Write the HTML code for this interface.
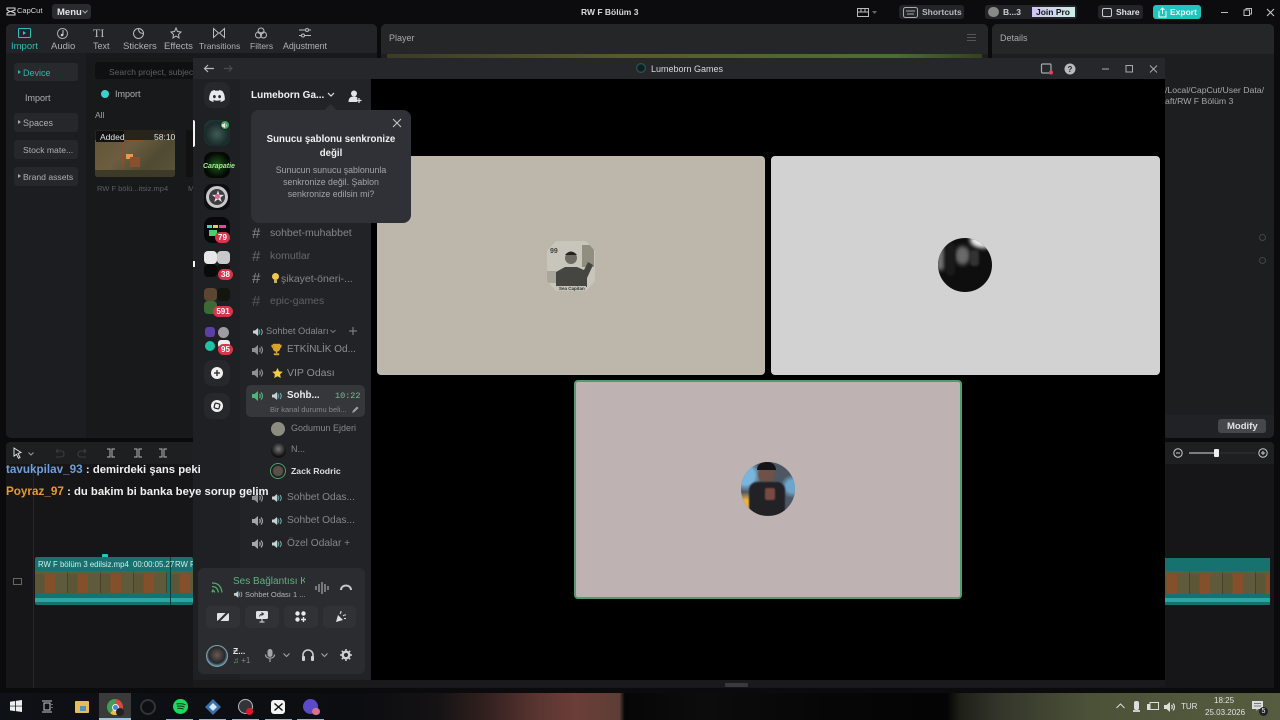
<!DOCTYPE html>
<html><head><meta charset="utf-8"><style>
*{box-sizing:border-box;margin:0;padding:0}
html,body{width:1280px;height:720px;overflow:hidden;background:#0b0b0d;font-family:"Liberation Sans","Noto Sans CJK JP",sans-serif}
.a{position:absolute;white-space:nowrap}
svg{position:absolute;overflow:visible}
.ct{font-size:9.5px;color:#aeb0b2;text-align:center}
.srv{position:absolute;left:204px;width:26px;height:26px;border-radius:8px;overflow:hidden}
.b{position:absolute;background:#d8344a;color:#fff;font-size:8px;font-weight:700;border-radius:8px;height:11px;line-height:11px;text-align:center;border:0}
.ch{position:absolute;font-size:10.5px;color:#7f8186}
.hash{position:absolute;left:252px;font-size:15px;color:#85878c;font-weight:400}
.fr{position:absolute;top:0;height:100%;width:33px;background:linear-gradient(90deg,#5a5636 0,#5a5636 30%,#84502c 30%,#84502c 62%,#5f5a3c 62%,#5f5a3c 100%);border-right:1px solid #46422a;border-top:3px solid #55623a}
</style></head><body>
<!-- capcut top bar -->
<div class="a" style="left:0;top:0;width:1280px;height:24px;background:#0c0c0e"></div>
<svg style="left:6px;top:7px" width="10" height="9" viewBox="0 0 10 9"><path d="M1 1h8v2L5 4.500 9 6v2H1V6l3-1.500L1 3z" fill="none" stroke="#ddd" stroke-width="1"/></svg>
<div class="a" style="left:17px;top:6px;font-size:7.500px;color:#d8d8d8">CapCut</div>
<div class="a" style="left:52px;top:4px;width:39px;height:15px;background:#2a2b2e;border-radius:3px"></div>
<div class="a" style="left:57px;top:6.500px;font-size:9.500px;font-weight:700;color:#e6e6e6">Menu</div>
<svg style="left:82px;top:10px" width="6" height="4"><path d="M.5.500L3 3l2.500-2.500" fill="none" stroke="#aaa"/></svg>
<div class="a" style="left:581px;top:7px;font-size:8.500px;font-weight:700;color:#d8d8d8">RW F Bölüm 3</div>
<svg style="left:857px;top:8px" width="12" height="9"><rect x=".5" y=".5" width="11" height="8" fill="none" stroke="#bbb"/><path d="M0 4h12M4 0v4M8 0v4" stroke="#bbb"/></svg>
<svg style="left:872px;top:11px" width="5" height="3"><path d="M0 0h5L2.500 3z" fill="#666"/></svg>
<div class="a" style="left:899px;top:5px;width:65px;height:14px;background:#232427;border-radius:3px"></div>
<svg style="left:903px;top:7px" width="15" height="11"><rect x=".5" y=".5" width="14" height="10" rx="2" fill="none" stroke="#aaa"/><path d="M3 4h9M4 7h7" stroke="#aaa"/></svg>
<div class="a" style="left:922px;top:7px;font-size:8.500px;font-weight:700;color:#b9b9b9">Shortcuts</div>
<div class="a" style="left:985px;top:5px;width:92px;height:14px;background:#232427;border-radius:3px"></div>
<div class="a" style="left:988px;top:7px;width:11px;height:10px;border-radius:5px;background:#888"></div>
<div class="a" style="left:1003px;top:7px;font-size:8.500px;font-weight:700;color:#cfcfcf">B...3</div>
<div class="a" style="left:1032px;top:7px;width:43px;height:10px;background:linear-gradient(90deg,#cfc4f2,#cdeee8)"></div>
<div class="a" style="left:1036px;top:7px;font-size:8.500px;font-weight:700;color:#111">Join Pro</div>
<div class="a" style="left:1098px;top:5px;width:45px;height:14px;background:#232427;border-radius:3px"></div>
<svg style="left:1102px;top:8px" width="11" height="9"><rect x=".5" y=".5" width="9" height="8" rx="1.500" fill="none" stroke="#ccc"/></svg>
<div class="a" style="left:1116px;top:7px;font-size:8.500px;font-weight:700;color:#e0e0e0">Share</div>
<div class="a" style="left:1153px;top:5px;width:48px;height:14px;background:#1fc5bd;border-radius:3px"></div>
<svg style="left:1158px;top:7px" width="9" height="11"><path d="M1 4v6h7V4M4.500 7V1M2.500 3l2-2 2 2" fill="none" stroke="#e8fffb"/></svg>
<div class="a" style="left:1170px;top:7px;font-size:8.500px;font-weight:700;color:#e8fffb">Export</div>
<svg style="left:1221px;top:8px" width="55" height="9"><path d="M0 4.500h7" stroke="#bbb"/><rect x="23" y="2" width="5.500" height="5.500" fill="none" stroke="#bbb"/><path d="M25 2V.5h5.500V6H28.500" fill="none" stroke="#bbb"/><path d="M46 1l7 7M53 1l-7 7" stroke="#ccc"/></svg>

<!-- capcut panels -->
<div class="a" style="left:6px;top:24px;width:371px;height:414px;background:#1c1d20;border-radius:5px"></div>
<div class="a" style="left:6px;top:24px;width:371px;height:29px;background:#232427;border-radius:5px 5px 0 0"></div>
<div class="a" style="left:86px;top:53px;width:291px;height:385px;background:#18191b"></div>
<div class="a" style="left:381px;top:24px;width:607px;height:414px;background:#1d1e20;border-radius:5px"></div>
<div class="a" style="left:381px;top:24px;width:607px;height:30px;background:#252628;border-radius:5px 5px 0 0"></div>
<div class="a ct" style="left:389px;top:33px;color:#aaa;font-size:9px">Player</div>
<div class="a" style="left:387px;top:54px;width:595px;height:6px;background:linear-gradient(90deg,#3d3a28,#5a5a2c 40%,#4c6e34 85%,#36401f)"></div>
<div class="a" style="left:967px;top:34px;width:9px;height:7px;border-top:1px solid #555;border-bottom:1px solid #555"></div>
<div class="a" style="left:967px;top:37px;width:9px;height:1px;background:#555"></div>
<div class="a" style="left:992px;top:24px;width:282px;height:414px;background:#1d1e20;border-radius:5px"></div>
<div class="a" style="left:992px;top:24px;width:282px;height:30px;background:#252628;border-radius:5px 5px 0 0"></div>
<div class="a ct" style="left:1000px;top:33px;color:#aaa;font-size:9px">Details</div>
<div class="a" style="left:1165px;top:85px;font-size:8.700px;color:#a8a8a8">/Local/CapCut/User Data/</div>
<div class="a" style="left:1165px;top:96px;font-size:8.700px;color:#a8a8a8">aft/RW F Bölüm 3</div>
<div class="a" style="left:1259px;top:234px;width:7px;height:7px;border:1px solid #444;border-radius:50%"></div>
<div class="a" style="left:1259px;top:257px;width:7px;height:7px;border:1px solid #444;border-radius:50%"></div>
<div class="a" style="left:1165px;top:415px;width:109px;height:23px;background:#212225;border-radius:0 0 5px 5px"></div>
<div class="a" style="left:1218px;top:419px;width:48px;height:14px;background:#46474b;border-radius:3px"></div>
<div class="a" style="left:1227px;top:421px;font-size:9.500px;font-weight:700;color:#e2e2e2">Modify</div>

<!-- capcut tabs -->
<svg style="left:18px;top:28px" width="13" height="10"><rect x=".5" y=".5" width="12" height="9" rx="1" fill="none" stroke="#2cc4bb"/><path d="M5 3l3 2-3 2z" fill="#2cc4bb"/></svg>
<div class="a ct" style="left:11px;top:41px;color:#29bdb4">Import</div>
<svg style="left:57px;top:28px" width="11" height="11"><circle cx="5.500" cy="5.500" r="5" fill="none" stroke="#aaa"/><path d="M6 2v5" stroke="#ccc"/><circle cx="5" cy="7" r="1.300" fill="#ccc"/></svg>
<div class="a ct" style="left:51px;top:41px">Audio</div>
<div class="a" style="left:93px;top:26px;font-family:'Liberation Serif',serif;font-size:12px;color:#bbb">TI</div>
<div class="a ct" style="left:93px;top:41px;font-size:9px">Text</div>
<svg style="left:133px;top:28px" width="11" height="11"><circle cx="5.500" cy="5.500" r="5" fill="none" stroke="#bbb"/><path d="M5.500.5q0 5 5 5" fill="none" stroke="#bbb"/></svg>
<div class="a ct" style="left:123px;top:41px">Stickers</div>
<svg style="left:170px;top:27px" width="12" height="12"><path d="M6 1l1.500 3.500L11 5 8.500 7.500 9 11 6 9 3 11l.5-3.500L1 5l3.500-.5z" fill="none" stroke="#bbb"/></svg>
<div class="a ct" style="left:164px;top:41px">Effects</div>
<svg style="left:213px;top:28px" width="12" height="10"><path d="M.5.500l5 4.500-5 4.500zM11.500.500l-5 4.500 5 4.500z" fill="none" stroke="#bbb"/></svg>
<div class="a ct" style="left:199px;top:41px;font-size:8.500px">Transitions</div>
<svg style="left:255px;top:27px" width="12" height="12"><circle cx="6" cy="4" r="3" fill="none" stroke="#bbb"/><circle cx="3.500" cy="8" r="3" fill="none" stroke="#bbb"/><circle cx="8.500" cy="8" r="3" fill="none" stroke="#bbb"/></svg>
<div class="a ct" style="left:250px;top:41px;font-size:8.500px">Filters</div>
<svg style="left:299px;top:28px" width="12" height="10"><path d="M0 2h12M0 7.500h12" stroke="#bbb"/><circle cx="8" cy="2" r="1.500" fill="#232427" stroke="#bbb"/><circle cx="4" cy="7.500" r="1.500" fill="#232427" stroke="#bbb"/></svg>
<div class="a ct" style="left:283px;top:41px;font-size:8.800px">Adjustment</div>

<!-- sidebar -->
<div class="a" style="left:14px;top:63px;width:64px;height:18px;background:#28292c;border-radius:3px"></div>
<svg style="left:18px;top:70px" width="3" height="4"><path d="M0 0l3 2-3 2z" fill="#2bb5ac"/></svg>
<div class="a ct" style="left:23px;top:67.500px;color:#2bb5ac;font-size:9px">Device</div>
<div class="a ct" style="left:25px;top:93px;font-size:9px">Import</div>
<div class="a" style="left:14px;top:113px;width:64px;height:19px;background:#26272a;border-radius:3px"></div>
<svg style="left:18px;top:120px" width="3" height="4"><path d="M0 0l3 2-3 2z" fill="#aaa"/></svg>
<div class="a ct" style="left:23px;top:118px;font-size:9px">Spaces</div>
<div class="a" style="left:14px;top:140px;width:64px;height:19px;background:#26272a;border-radius:3px"></div>
<div class="a ct" style="left:23px;top:145px;font-size:8.600px">Stock mate...</div>
<div class="a" style="left:14px;top:167px;width:64px;height:19px;background:#26272a;border-radius:3px"></div>
<svg style="left:18px;top:174px" width="3" height="4"><path d="M0 0l3 2-3 2z" fill="#aaa"/></svg>
<div class="a ct" style="left:23px;top:171.500px;font-size:8.600px">Brand assets</div>
<div class="a" style="left:95px;top:62px;width:110px;height:17px;background:#0f1012;border-radius:3px"></div>
<div class="a" style="left:109px;top:66.500px;font-size:8.500px;color:#5f6063">Search project, subjects in</div>
<div class="a" style="left:101px;top:90px;width:8px;height:8px;border-radius:50%;background:#39d3ca"></div>
<div class="a ct" style="left:115px;top:89px;font-size:9px">Import</div>
<div class="a" style="left:95px;top:110px;font-size:8.500px;color:#a0a0a0">All</div>
<div class="a" style="left:95px;top:130px;width:80px;height:47px;background:linear-gradient(135deg,#5d5436,#6d5d40 40%,#4f4a32 70%,#5a553c);border-radius:3px;overflow:hidden">
<div class="a" style="left:27px;top:9px;width:22px;height:2px;background:#8c4f2d"></div>
<div class="a" style="left:27px;top:9px;width:2px;height:28px;background:#8c4f2d"></div>
<div class="a" style="left:31px;top:24px;width:7px;height:5px;background:#e69a4e"></div>
<div class="a" style="left:35px;top:27px;width:10px;height:10px;background:#8c4f2d"></div>
<div class="a" style="left:0;top:40px;width:80px;height:7px;background:#3e3a28"></div>
<div class="a" style="left:0;top:0;width:80px;height:10px;background:#26241b"></div>
<div class="a" style="left:1px;top:1px;width:28px;height:11px;background:#111"></div>
<div class="a" style="left:5px;top:1.500px;font-size:8.500px;color:#e4e4e4">Added</div>
<div class="a" style="left:59px;top:1.500px;font-size:8.500px;color:#e4e4e4">58:10</div>
</div>
<div class="a" style="left:97px;top:184px;font-size:7.500px;color:#5c5d60">RW F bölü...itsiz.mp4</div>
<div class="a" style="left:186px;top:130px;width:7px;height:47px;background:#111"></div>
<div class="a" style="left:188px;top:184px;font-size:7.500px;color:#5c5d60">M</div>

<!-- timeline -->
<div class="a" style="left:6px;top:442px;width:1268px;height:22px;background:#1e1f21;border-radius:4px 4px 0 0"></div>
<div class="a" style="left:6px;top:464px;width:1268px;height:224px;background:#161618"></div>
<div class="a" style="left:33px;top:464px;width:1px;height:224px;background:#26272a"></div>
<svg style="left:13px;top:447px" width="10" height="12"><path d="M1 1l7 4.500-3 1 2 4-1.500.8-2-4L1 9z" fill="none" stroke="#ddd"/></svg>
<svg style="left:28px;top:452px" width="6" height="4"><path d="M.5.500L3 3l2.500-2.500" fill="none" stroke="#999"/></svg>
<svg style="left:53px;top:448px" width="36" height="10"><g fill="none" stroke="#3c3d40"><path d="M3 3h5q3 0 3 3t-3 3H3M3 3l2-2M3 3l2 2"/><path d="M33 3h-5q-3 0-3 3t3 3h5M33 3l-2-2M33 3l-2 2"/></g></svg>
<svg style="left:105px;top:448px" width="62" height="10"><g fill="none" stroke="#b5b5b5"><path d="M2 1h3v8H2M10 1H7v8h3"/><path d="M29 1h3v8h-3M37 1h-3v8h3"/><path d="M54 1h3v8h-3M62 1h-3v8h3"/></g></svg>
<div class="a" style="left:102px;top:554px;width:6px;height:6px;background:#22c8c0;border-radius:1px"></div>
<!-- clip -->
<div class="a" style="left:35px;top:557px;width:158px;height:48px;background:#17716f;border-radius:2px"></div>
<div class="a" style="left:35px;top:571px;width:158px;height:22px;overflow:hidden"><div class="fr" style="left:0"></div><div class="fr" style="left:33px"></div><div class="fr" style="left:66px"></div><div class="fr" style="left:99px"></div><div class="fr" style="left:135px"></div></div>
<div class="a" style="left:35px;top:598px;width:158px;height:4px;background:#2aa7a0"></div>
<div class="a" style="left:170px;top:557px;width:1px;height:48px;background:#0e3e3d"></div>
<div class="a" style="left:38px;top:560px;font-size:7.800px;color:#d5ecea">RW F bölüm 3 edilsiz.mp4</div>
<div class="a" style="left:133px;top:560px;font-size:7.800px;color:#d5ecea">00:00:05.27</div>
<div class="a" style="left:175px;top:560px;font-size:7.800px;color:#d5ecea">RW F</div>
<div class="a" style="left:13px;top:578px;width:9px;height:7px;border:1px solid #666"></div>
<!-- right clip -->
<div class="a" style="left:1165px;top:558px;width:105px;height:47px;background:#17716f"></div>
<div class="a" style="left:1165px;top:571px;width:105px;height:23px;overflow:hidden"><div class="fr" style="left:-8px"></div><div class="fr" style="left:25px"></div><div class="fr" style="left:58px"></div><div class="fr" style="left:91px"></div></div>
<div class="a" style="left:1165px;top:598px;width:105px;height:4px;background:#2aa7a0"></div>
<!-- zoom -->
<svg style="left:1173px;top:448px" width="96" height="10"><circle cx="5" cy="5" r="4.200" fill="none" stroke="#ccc"/><path d="M3 5h4" stroke="#ccc"/><path d="M16 5h27" stroke="#ddd"/><path d="M47 5h36" stroke="#333"/><rect x="41" y="1" width="5" height="8" rx="1" fill="#eee"/><circle cx="90" cy="5" r="4.200" fill="none" stroke="#ccc"/><path d="M88 5h4M90 3v4" stroke="#ccc"/></svg>

<!-- discord window -->
<div class="a" style="left:193px;top:58px;width:972px;height:622px;background:#000"></div>
<div class="a" style="left:193px;top:58px;width:972px;height:21px;background:#26272b"></div>
<div class="a" style="left:193px;top:79px;width:178px;height:601px;background:#222327"></div>
<div class="a" style="left:193px;top:79px;width:47px;height:601px;background:#1f2023"></div>
<svg style="left:203px;top:64px" width="30" height="9"><path d="M11 4.500H1.500M5 1L1.500 4.500 5 8" fill="none" stroke="#b8b9bb" stroke-width="1.200"/><path d="M21 4.500h8M26 1.500l3 3-3 3" fill="none" stroke="#4a4b4f" stroke-width="1.200"/></svg>
<div class="a" style="left:636px;top:63px;width:10px;height:10px;border-radius:50%;background:radial-gradient(#0f1f20 40%,#3fa79a)"></div>
<div class="a" style="left:651px;top:63.500px;font-size:9px;color:#d8d9da">Lumeborn Games</div>
<svg style="left:1041px;top:63px" width="120" height="12"><rect x=".5" y="1" width="9.500" height="9" rx="1" fill="none" stroke="#a8a9ab" stroke-width="1.200"/><circle cx="10" cy="9.500" r="2" fill="#e0435a"/><circle cx="29" cy="6" r="5.500" fill="#b8b9bb"/><text x="29" y="9" font-size="8" font-weight="700" text-anchor="middle" fill="#26272b" font-family="Liberation Sans">?</text><path d="M61 6h7" stroke="#a8a9ab"/><rect x="85" y="2.500" width="6.500" height="6.500" fill="none" stroke="#a8a9ab"/><path d="M109 2.500l7 7M116 2.500l-7 7" stroke="#a8a9ab"/></svg>

<!-- video tiles -->
<div class="a" style="left:377px;top:156px;width:388px;height:219px;background:#bdb6aa;border-radius:4px"></div>
<div class="a" style="left:771px;top:156px;width:389px;height:219px;background:#d2d2d2;border-radius:4px"></div>
<div class="a" style="left:574px;top:380px;width:388px;height:219px;background:#bfb2b2;border-radius:4px;border:2px solid #4f9d6e"></div>
<!-- avatars -->
<svg style="left:546px;top:239px" width="50" height="54" viewBox="0 0 50 54"><defs><clipPath id="c1"><path d="M10 2h30l9 10v30l-9 10H10L1 42V12z"/></clipPath></defs><g clip-path="url(#c1)"><rect width="50" height="54" fill="#c8c6ba"/><rect x="36" y="6" width="12" height="22" fill="#8f8e80"/><path d="M10 48V33l9-5h12l7 3 4-8 5 3-6 13v9z" fill="#454542"/><circle cx="25" cy="19" r="6" fill="#6d6a62"/><path d="M19 16q6-7 12 0" fill="#222"/><rect x="1" y="32" width="9" height="12" fill="#a9a79c"/><rect x="10" y="47" width="30" height="7" fill="#c4c2b6"/></g><text x="4" y="14" font-size="7" font-weight="700" fill="#444" font-family="Liberation Sans">99</text></svg>
<div class="a" style="left:559px;top:286px;font-size:4.500px;font-weight:700;color:#333">Sea Capitan</div>
<div class="a" style="left:938px;top:238px;width:54px;height:54px;border-radius:50%;background:#0e0e0e;overflow:hidden">
<div class="a" style="left:32px;top:-6px;width:26px;height:16px;border-radius:50%;background:#eee;filter:blur(2px)"></div>
<div class="a" style="left:-2px;top:8px;width:8px;height:24px;background:#777;filter:blur(2px)"></div>
<div class="a" style="left:17px;top:8px;width:15px;height:19px;border-radius:50%;background:#6a6a6a;filter:blur(2px)"></div>
<div class="a" style="left:32px;top:12px;width:9px;height:16px;background:#333;border-radius:3px;filter:blur(1px)"></div>
<div class="a" style="left:8px;top:4px;width:9px;height:34px;border-radius:6px;background:#1a1a1a;filter:blur(1px)"></div>
</div>
<div class="a" style="left:741px;top:462px;width:54px;height:54px;border-radius:50%;background:#4d5763;overflow:hidden">
<div class="a" style="left:0;top:0;width:54px;height:54px;background:radial-gradient(circle at 10% 88%,#f1b33e 14%,transparent 26%),radial-gradient(circle at 8% 25%,#79b5dc 14%,transparent 26%),radial-gradient(circle at 95% 45%,#6da6cc 10%,transparent 20%)"></div>
<div class="a" style="left:17px;top:3px;width:17px;height:18px;border-radius:50%;background:#6e5148;filter:blur(.7px)"></div>
<div class="a" style="left:16px;top:0;width:19px;height:8px;border-radius:8px 8px 0 0;background:#141416"></div>
<div class="a" style="left:8px;top:20px;width:36px;height:34px;border-radius:8px 8px 0 0;background:#222226;filter:blur(.7px)"></div>
<div class="a" style="left:24px;top:26px;width:10px;height:12px;background:#7a4a42;border-radius:2px;filter:blur(.7px)"></div>
</div>

<!-- discord rail -->
<div class="a" style="left:204px;top:82px;width:26px;height:26px;border-radius:8px;background:#27282c"></div>
<svg style="left:209px;top:90px" width="16" height="12" viewBox="0 0 16 12"><path d="M13.400 1A13 13 0 0 0 10.200 0l-.4.800a12 12 0 0 0-3.600 0L5.800 0a13 13 0 0 0-3.200 1C.5 4 0 7 .2 10a13 13 0 0 0 4 2l.8-1.300-1.300-.7.300-.2a9.300 9.300 0 0 0 8 0l.3.200-1.300.7.800 1.300a13 13 0 0 0 4-2c.3-3.500-.5-6.500-2.400-9zM5.400 8.200C4.600 8.200 4 7.500 4 6.600S4.600 5 5.400 5s1.400.7 1.400 1.600-.6 1.600-1.400 1.600zm5.200 0c-.8 0-1.400-.7-1.400-1.600S9.800 5 10.600 5 12 5.700 12 6.600s-.6 1.600-1.400 1.600z" fill="#e8e9ea"/></svg>
<div class="a" style="left:193px;top:120px;width:2px;height:27px;background:#f2f3f5;border-radius:0 2px 2px 0"></div>
<div class="srv" style="top:120px;background:radial-gradient(circle at 50% 55%,#3e5b55,#1a2b2a 60%,#29423c)"></div>
<div class="a" style="left:220px;top:120px;width:10px;height:10px;border-radius:50%;background:#3ba55c;border:1px solid #1f2023"></div>
<svg style="left:222px;top:122.500px" width="6" height="5"><path d="M0 1.500h1L3 0v5L1 3.500H0zM4 1q1 1.500 0 3" fill="#e8e8e8" stroke="#e8e8e8" stroke-width=".4"/></svg>
<div class="srv" style="top:152px;background:radial-gradient(ellipse at 50% 50%,#1d5d1a,#050a05 65%)"></div>
<div class="a" style="left:203px;top:163px;font-size:7px;font-weight:700;font-style:italic;color:#9ff08a">Carapatie</div>
<div class="srv" style="top:184px;background:#0e0e12"></div>
<div class="a" style="left:206px;top:186px;width:22px;height:22px;border-radius:50%;border:3px solid #c8c8c8;background:#3d3d42"></div>
<div class="a" style="left:211.500px;top:190px;font-size:13px;line-height:14px;color:#e8e8e8">★</div>
<div class="a" style="left:214.500px;top:194px;width:5px;height:5px;border-radius:50%;background:#d86a94"></div>
<div class="srv" style="top:217px;background:#08080a"></div>
<div class="a" style="left:207px;top:225px;width:5px;height:3px;background:#34d6c6"></div>
<div class="a" style="left:213px;top:225px;width:5px;height:3px;background:#e3d23b"></div>
<div class="a" style="left:219px;top:225px;width:7px;height:3px;background:#d84ab0"></div>
<div class="a" style="left:209px;top:230px;width:8px;height:6px;background:#48d16a"></div>
<div class="b" style="left:215px;top:232px;width:15px">79</div>
<div class="a" style="left:204px;top:251px;width:13px;height:13px;border-radius:4px;background:#e8e8e8"></div>
<div class="a" style="left:217px;top:251px;width:13px;height:13px;border-radius:4px;background:#c9c9c9"></div>
<div class="a" style="left:204px;top:264px;width:13px;height:13px;border-radius:4px;background:#0a0a0a"></div>
<div class="a" style="left:217px;top:264px;width:13px;height:13px;border-radius:4px;background:#101010"></div>
<div class="b" style="left:218px;top:269px;width:15px">38</div>
<div class="a" style="left:193px;top:261px;width:2px;height:6px;background:#f2f3f5"></div>
<div class="a" style="left:204px;top:288px;width:13px;height:13px;border-radius:4px;background:#5c4531"></div>
<div class="a" style="left:217px;top:288px;width:13px;height:13px;border-radius:4px;background:#12160f"></div>
<div class="a" style="left:204px;top:301px;width:13px;height:13px;border-radius:4px;background:#3b6b33"></div>
<div class="b" style="left:213px;top:306px;width:20px">591</div>
<div class="a" style="left:205px;top:327px;width:10px;height:10px;border-radius:3px;background:#5b3fa8"></div>
<div class="a" style="left:218px;top:327px;width:11px;height:11px;border-radius:50%;background:#9d9da0"></div>
<div class="a" style="left:205px;top:341px;width:10px;height:10px;border-radius:50%;background:#1fc3a5"></div>
<div class="a" style="left:218px;top:340px;width:12px;height:8px;border-radius:3px;background:#eee"></div>
<div class="b" style="left:218px;top:344px;width:15px">95</div>
<div class="a" style="left:204px;top:360px;width:26px;height:26px;border-radius:8px;background:#27282c"></div>
<svg style="left:211px;top:367px" width="12" height="12"><circle cx="6" cy="6" r="6" fill="#f0f0f0"/><path d="M6 3v6M3 6h6" stroke="#222" stroke-width="1.300"/></svg>
<div class="a" style="left:204px;top:393px;width:26px;height:26px;border-radius:8px;background:#27282c"></div>
<svg style="left:211px;top:400px" width="12" height="12"><circle cx="6" cy="6" r="6" fill="#f0f0f0"/><rect x="3.500" y="3.500" width="5" height="5" rx="1" fill="none" stroke="#222" stroke-width="1.200" transform="rotate(15 6 6)"/></svg>

<!-- channel header -->
<div class="a" style="left:251px;top:90px;font-size:10px;font-weight:700;color:#f0f1f2">Lumeborn Ga...</div>
<svg style="left:327px;top:92px" width="8" height="6"><path d="M1 1l3 3 3-3" fill="none" stroke="#e2e3e4" stroke-width="1.200"/></svg>
<svg style="left:348px;top:90px" width="14" height="13"><circle cx="6" cy="3.500" r="3" fill="#e2e3e4"/><path d="M.5 12c0-4 2-5.500 5.500-5.500 1.500 0 2.500.3 3.300 1V12z" fill="#e2e3e4"/><path d="M11 8v5M8.500 10.500h5" stroke="#e2e3e4" stroke-width="1.200"/></svg>

<!-- channels -->
<div class="hash" style="top:225px">#</div><div class="ch" style="left:270px;top:227px;color:#84868b">sohbet-muhabbet</div>
<div class="hash" style="top:248px;color:#666">#</div><div class="ch" style="left:270px;top:250px;color:#66686c">komutlar</div>
<div class="hash" style="top:270px">#</div>
<svg style="left:272px;top:273px" width="7" height="11"><circle cx="3.500" cy="3.500" r="3.500" fill="#f1c84a"/><rect x="2" y="7" width="3" height="3" fill="#c8b060"/></svg>
<div class="ch" style="left:281px;top:273px;color:#84868b">şikayet-öneri-...</div>
<div class="hash" style="top:293px;color:#555">#</div><div class="ch" style="left:270px;top:295px;color:#5e6064">epic-games</div>

<svg width="0" height="0" style="left:0;top:0"><defs><g id="spk"><path d="M0 3h2.500L6 0v10L2.500 7H0z" fill="currentColor"/><path d="M7.500 3q1.500 2 0 4M9 1.500q3 3.500 0 7" fill="none" stroke="currentColor" stroke-width="1.200"/></g><g id="spk2"><path d="M0 2.500h2L5 0v8L2 5.500H0z" fill="#cfd0d2"/><path d="M5.500 0.500q3.500 3.500 0 7z" fill="#2fa8a8"/><path d="M8 1q2.500 3 0 6" fill="none" stroke="#9fb8b8" stroke-width=".9"/></g></defs></svg>

<svg style="left:253px;top:327.500px" width="10" height="8"><use href="#spk2"/></svg>
<div class="ch" style="left:266px;top:326px;font-size:9.300px;color:#85878b">Sohbet Odaları</div>
<svg style="left:330px;top:329px" width="6" height="5"><path d="M.5 1l2.500 2.500L5.500 1" fill="none" stroke="#777"/></svg>
<svg style="left:349px;top:327px" width="8" height="8"><path d="M4 0v8M0 4h8" stroke="#8a8b8f"/></svg>

<svg style="left:252px;top:345px;color:#8f9094" width="13" height="10"><use href="#spk"/></svg>
<svg style="left:271px;top:344px" width="11" height="12"><path d="M2 0h7v4q0 3.500-3.500 3.500T2 4zM5 7h1v2H5zM3 9.500h5V11H3zM2 1H.5q0 3 2 3.500M9 1h1.500q0 3-2 3.500" fill="#d8a52a" stroke="#d8a52a" stroke-width=".4"/></svg>
<div class="ch" style="left:287px;top:344px;font-size:10px;color:#8d8f93">ETKİNLİK Od...</div>
<svg style="left:252px;top:368px;color:#8f9094" width="13" height="10"><use href="#spk"/></svg>
<svg style="left:272px;top:368px" width="11" height="10"><path d="M5.500 0l1.600 3.400 3.700.4-2.700 2.500.7 3.700-3.300-1.800L2.200 10l.7-3.700L.2 3.800l3.700-.4z" fill="#f3cf3b"/></svg>
<div class="ch" style="left:287px;top:367px;color:#8d8f93">VIP Odası</div>

<div class="a" style="left:246px;top:385px;width:119px;height:32px;background:#36373b;border-radius:5px"></div>
<svg style="left:252px;top:391px;color:#4fb37a" width="13" height="10"><use href="#spk"/></svg>
<svg style="left:272px;top:392px" width="10" height="8"><use href="#spk2"/></svg>
<div class="a" style="left:287px;top:390px;font-size:9.800px;font-weight:700;color:#eceded">Sohb...</div>
<div class="a" style="left:335px;top:391px;font-size:8.500px;font-family:'Liberation Mono',monospace;color:#7fb898">10:22</div>
<div class="a" style="left:270px;top:405px;font-size:7.500px;color:#84868b">Bir kanal durumu beli...</div>
<svg style="left:352px;top:406px" width="7" height="7"><path d="M0 7l1-2.500L5 .5 6.500 2 2.500 6z" fill="#a0a1a4"/></svg>

<div class="a" style="left:271px;top:422px;width:14px;height:14px;border-radius:50%;background:#8d8c80"></div>
<div class="ch" style="left:291px;top:423px;font-size:9px;color:#85878b">Godumun Ejderi</div>
<div class="a" style="left:271px;top:443px;width:15px;height:15px;border-radius:50%;background:radial-gradient(circle at 50% 40%,#777,#111 65%)"></div>
<div class="ch" style="left:291px;top:444px;font-size:9px;color:#85878b">N...</div>
<div class="a" style="left:270px;top:463px;width:16px;height:16px;border-radius:50%;background:radial-gradient(circle,#5a5048 45%,#1c1c1f 60%);border:1px solid #49a56f"></div>
<div class="a" style="left:291px;top:466px;font-size:8.700px;font-weight:700;color:#dcdde0">Zack Rodric</div>

<svg style="left:252px;top:493px;color:#8f9094" width="13" height="10"><use href="#spk"/></svg>
<svg style="left:272px;top:494px" width="10" height="8"><use href="#spk2"/></svg>
<div class="ch" style="left:287px;top:492px;font-size:10.200px;color:#85878b">Sohbet Odas...</div>
<svg style="left:252px;top:516px;color:#a5a6a9" width="13" height="10"><use href="#spk"/></svg>
<svg style="left:272px;top:517px" width="10" height="8"><use href="#spk2"/></svg>
<div class="ch" style="left:287px;top:515px;font-size:10.200px;color:#85878b">Sohbet Odas...</div>
<svg style="left:252px;top:539px;color:#a5a6a9" width="13" height="10"><use href="#spk"/></svg>
<svg style="left:272px;top:540px" width="10" height="8"><use href="#spk2"/></svg>
<div class="ch" style="left:287px;top:538px;font-size:10.200px;color:#85878b">Özel Odalar +</div>

<!-- popup -->
<div class="a" style="left:251px;top:110px;width:160px;height:113px;background:#303136;border-radius:8px"></div>
<div class="a" style="left:326px;top:106px;width:9px;height:9px;background:#303136;transform:rotate(45deg)"></div>
<svg style="left:393px;top:119px" width="8" height="8"><path d="M0 0l8 8M8 0L0 8" stroke="#c9cacc" stroke-width="1"/></svg>
<div class="a" style="left:251px;top:133px;width:160px;text-align:center;font-size:9.700px;font-weight:700;line-height:13.500px;color:#f0f1f2;white-space:normal">Sunucu şablonu senkronize<br>değil</div>
<div class="a" style="left:251px;top:164px;width:160px;text-align:center;font-size:8.800px;line-height:12px;color:#a3a5a9;white-space:normal">Sunucun sunucu şablonunla<br>senkronize değil. Şablon<br>senkronize edilsin mi?</div>

<!-- user panel -->
<div class="a" style="left:198px;top:568px;width:167px;height:106px;background:#2b2c30;border-radius:6px"></div>
<svg style="left:211px;top:581px" width="12" height="12"><g fill="none" stroke="#4fa96f" stroke-width="1.200"><path d="M1 2q9 0 10 9.500M1 5.500q5.500 0 6.500 6M1 9q2 0 2.800 2.500"/></g><circle cx="1.500" cy="10.500" r="1" fill="#4fa96f"/></svg>
<div class="a" style="left:233px;top:576px;font-size:10px;color:#5fb184;width:72px;overflow:hidden">Ses Bağlantısı Kuruldu</div>
<svg style="left:234px;top:591px" width="8" height="7"><use href="#spk2" transform="scale(.85)"/></svg>
<div class="a" style="left:245px;top:590px;font-size:7.500px;color:#b0b2b5">Sohbet Odası 1 ...</div>
<svg style="left:315px;top:582px" width="14" height="12"><path d="M1 4v4M4 2v8M7 0v12M10 2v8M13 4v4" stroke="#a8a9ac" stroke-width="1.200"/></svg>
<svg style="left:340px;top:584px" width="12" height="7"><path d="M1 6c0-6 10-6 10 0" fill="none" stroke="#c8c9cb" stroke-width="2"/></svg>
<div class="a" style="left:206px;top:606px;width:34px;height:22px;background:#313236;border-radius:5px"></div>
<div class="a" style="left:245px;top:606px;width:34px;height:22px;background:#313236;border-radius:5px"></div>
<div class="a" style="left:284px;top:606px;width:34px;height:22px;background:#313236;border-radius:5px"></div>
<div class="a" style="left:323px;top:606px;width:33px;height:22px;background:#313236;border-radius:5px"></div>
<svg style="left:217px;top:611px" width="12" height="12"><rect x="0" y="2" width="12" height="8" rx="1" fill="#e0e1e2"/><path d="M0 12L12 0" stroke="#2b2c30" stroke-width="2"/></svg>
<svg style="left:256px;top:611px" width="12" height="12"><rect x="0" y="0" width="12" height="8" rx="1.500" fill="#e0e1e2"/><path d="M6 8v3M3.500 11h5" stroke="#e0e1e2"/><path d="M3.500 5.500q.5-2.500 3.500-2.500M5.500 1.500L7.500 3 5.500 4.500" fill="none" stroke="#313236"/></svg>
<svg style="left:295px;top:611px" width="11" height="11"><circle cx="2.500" cy="2.500" r="2.200" fill="#e8e9ea"/><circle cx="8.500" cy="2.500" r="2.200" fill="#e8e9ea"/><circle cx="2.500" cy="8.500" r="2.200" fill="#e8e9ea"/><path d="M8.500 6v5M6 8.500h5" stroke="#e8e9ea" stroke-width="1.400"/></svg>
<svg style="left:335px;top:611px" width="11" height="12"><path d="M1 11l2-7 5 5z" fill="#e0e1e2"/><path d="M5 3q1-1 1-3M8 5q1.500-1.500 3-1M9 7.500h2" stroke="#e0e1e2" stroke-width="1.100"/></svg>

<div class="a" style="left:206px;top:645px;width:22px;height:22px;border-radius:50%;background:radial-gradient(circle at 50% 45%,#6a5a52,#26282a 55%,#5c8aa0 72%,#d8b24a);border:1px solid #7fa0a8"></div>
<div class="a" style="left:233px;top:646px;font-size:8.500px;font-weight:700;color:#e3e4e5">Ƶ...</div>
<div class="a" style="left:233px;top:656px;font-size:8px;color:#4fb37a">♫ <span style="color:#85878b">+1</span></div>
<svg style="left:265px;top:649px" width="10" height="13"><rect x="2.500" y="0" width="5" height="8" rx="2.500" fill="#a5a6a9"/><path d="M.5 5.500c0 5 9 5 9 0M5 10v3" fill="none" stroke="#a5a6a9" stroke-width="1.200"/></svg>
<svg style="left:283px;top:653px" width="7" height="5"><path d="M.5.500l3 3 3-3" fill="none" stroke="#a5a6a9" stroke-width="1.100"/></svg>
<svg style="left:302px;top:649px" width="12" height="12"><path d="M1 8V6a5 5 0 0 1 10 0v2" fill="none" stroke="#d0d1d3" stroke-width="1.500"/><rect x="0" y="7" width="3" height="5" rx="1" fill="#d0d1d3"/><rect x="9" y="7" width="3" height="5" rx="1" fill="#d0d1d3"/></svg>
<svg style="left:321px;top:653px" width="7" height="5"><path d="M.5.500l3 3 3-3" fill="none" stroke="#a5a6a9" stroke-width="1.100"/></svg>
<svg style="left:340px;top:649px" width="12" height="12" viewBox="0 0 12 12"><circle cx="6" cy="6" r="3.300" fill="none" stroke="#d0d1d3" stroke-width="2.400"/><path d="M6 0v2.500M6 9.500V12M0 6h2.500M9.500 6H12M1.800 1.800l1.700 1.700M8.500 8.500l1.700 1.700M10.200 1.800L8.500 3.500M3.500 8.500l-1.700 1.700" stroke="#d0d1d3" stroke-width="1.500"/></svg>

<!-- chat overlay -->
<div class="a" style="left:6px;top:463px;font-size:11.700px;font-weight:700;color:#6f9fdc">tavukpilav_93 <span style="color:#f0f0f0;font-size:11.300px">: demirdeki şans peki</span></div>
<div class="a" style="left:6px;top:485px;font-size:11.700px;font-weight:700;color:#e89a2e">Poyraz_97 <span style="color:#f0f0f0;font-size:11.300px">: du bakim bi banka beye sorup gelim</span></div>

<!-- scrollbar -->
<div class="a" style="left:193px;top:680px;width:972px;height:7px;background:#1a1a1c"></div>
<div class="a" style="left:725px;top:683px;width:23px;height:4px;background:#3a3a3c;border-radius:1px"></div>

<!-- taskbar -->
<div class="a" style="left:0;top:693px;width:1280px;height:27px;background:linear-gradient(90deg,#0e1116 0,#0c0d11 28%,#141213 34%,#33201f 38%,#5a3531 42%,#6c3e38 45%,#5c3e36 48.400%,#070606 48.800%,#0d0c0c 55%,#060606 65%,#040404 74%,#1e1f18 75%,#33352a 78%,#4c5238 85%,#555c40 100%)"></div>
<svg style="left:10px;top:700px" width="12" height="12"><path d="M0 1.700L5 1v4.700H0zM5.800.9L12 0v5.700H5.800zM0 6.400h5v4.700L0 10.400zM5.800 6.400H12V12l-6.200-.9z" fill="#eee"/></svg>
<svg style="left:42px;top:701px" width="11" height="11"><rect x="2" y="2" width="6" height="7" fill="none" stroke="#c8c8c8"/><path d="M0 0h10M0 11h10M10 3v1M10 6v1" stroke="#c8c8c8"/></svg>
<div class="a" style="left:75px;top:701px;width:14px;height:12px;background:#e6be54;border-radius:1px"></div>
<div class="a" style="left:80px;top:706px;width:6px;height:5px;background:#5c8fb5"></div>
<div class="a" style="left:99px;top:693px;width:32px;height:27px;background:#3a3a3b"></div>
<div class="a" style="left:99px;top:718px;width:32px;height:2px;background:#9fc4dc"></div>
<div class="a" style="left:107px;top:699px;width:16px;height:16px;border-radius:50%;background:conic-gradient(#d94a3a 0 33%,#e8c23a 33% 60%,#3fa055 60%)"></div>
<div class="a" style="left:111.500px;top:703.500px;width:7px;height:7px;border-radius:50%;background:#4a87e0;border:1px solid #eee"></div>
<div class="a" style="left:116px;top:708px;width:8px;height:8px;border-radius:50%;background:#222"></div>
<div class="a" style="left:140px;top:699px;width:16px;height:16px;border-radius:50%;border:2px solid #333"></div>
<div class="a" style="left:173px;top:699px;width:15px;height:15px;border-radius:50%;background:#1ed760"></div>
<svg style="left:175.500px;top:703px" width="10" height="7"><path d="M.5 1q4.500-1 9 .8M1 3.300q4-.8 7.500.7M1.500 5.500q3-.6 6 .6" fill="none" stroke="#10331c" stroke-width="1"/></svg>
<svg style="left:205px;top:699px" width="16" height="16"><path d="M8 0l8 8-8 8-8-8z" fill="#3a6fa8"/><path d="M8 4l4 4-4 4-4-4z" fill="#d8e8f8"/></svg>
<div class="a" style="left:238px;top:699px;width:15px;height:15px;border-radius:50%;background:#33343a;border:1px solid #bbb"></div>
<div class="a" style="left:246px;top:708px;width:7px;height:7px;border-radius:50%;background:#e8152a"></div>
<div class="a" style="left:271px;top:700px;width:14px;height:14px;border-radius:3px;background:#f2f2f2"></div>
<svg style="left:273.500px;top:703px" width="9" height="8"><path d="M.5.500l8 7M8.500.500l-8 7" stroke="#111" stroke-width="1.400"/></svg>
<div class="a" style="left:303px;top:699px;width:15px;height:15px;border-radius:50%;background:#5a4ac8"></div>
<div class="a" style="left:312px;top:708px;width:8px;height:7px;border-radius:4px;background:#d8728a"></div>
<div class="a" style="left:166px;top:719px;width:27px;height:1px;background:#8fb6d4"></div>
<div class="a" style="left:199px;top:719px;width:27px;height:1px;background:#8fb6d4"></div>
<div class="a" style="left:232px;top:719px;width:27px;height:1px;background:#8fb6d4"></div>
<div class="a" style="left:265px;top:719px;width:27px;height:1px;background:#8fb6d4"></div>
<div class="a" style="left:297px;top:719px;width:27px;height:1px;background:#8fb6d4"></div>
<!-- tray -->
<svg style="left:1116px;top:703px" width="9" height="6"><path d="M.5 5L4.500 1l4 4" fill="none" stroke="#ddd"/></svg>
<div class="a" style="left:1134px;top:701px;width:5px;height:9px;border-radius:2px;background:#ddd"></div>
<div class="a" style="left:1133px;top:710px;width:7px;height:2px;background:#ccc"></div>
<svg style="left:1147px;top:702px" width="12" height="10"><rect x="3" y=".5" width="8.500" height="7" fill="none" stroke="#ddd"/><rect x="0" y="2" width="3" height="6" fill="#ddd"/></svg>
<svg style="left:1164px;top:702px;color:#ddd" width="11" height="10"><use href="#spk"/></svg>
<div class="a" style="left:1181px;top:702px;font-size:8px;color:#e2e2e2">TUR</div>
<div class="a" style="left:1214px;top:696px;font-size:8px;color:#e2e2e2">18:25</div>
<div class="a" style="left:1205px;top:708px;font-size:8px;color:#e2e2e2">25.03.2026</div>
<svg style="left:1252px;top:701px" width="11" height="10"><path d="M0 0h11v8H6l-1.500 2V8H0z" fill="#ddd"/><path d="M2 2.500h7M2 5h7" stroke="#555" stroke-width=".8"/></svg>
<div class="a" style="left:1259px;top:707px;width:9px;height:9px;border-radius:50%;background:#222;color:#eee;font-size:7px;line-height:9px;text-align:center">5</div>
</body></html>
